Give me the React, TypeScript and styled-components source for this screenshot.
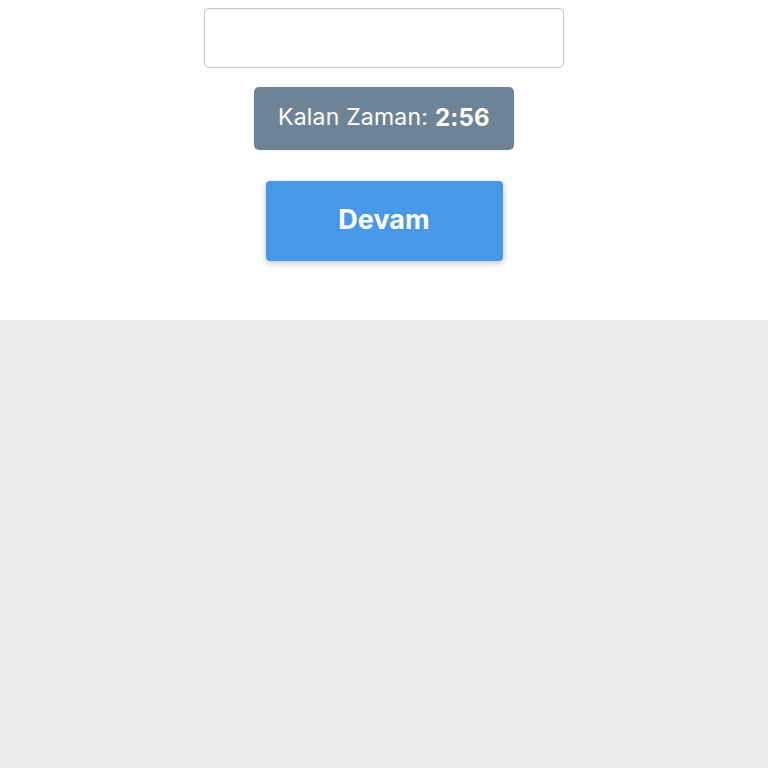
import React from 'react'
import styled, { createGlobalStyle } from 'styled-components'

const GlobalStyle = createGlobalStyle`
  html, body {
    margin: 0;
    padding: 0;
    background: #ebebeb;
    font-family: Inter, "Open Sans", Arial, sans-serif;
  }
`

const Panel = styled.main`
  background: #ffffff;
  height: 321px;
  box-sizing: border-box;
  padding-top: 8px;
  display: flex;
  flex-direction: column;
  align-items: center;
  border-bottom: 1px solid #e6e6e6;
`

const AnswerInput = styled.input`
  width: 360px;
  height: 60px;
  box-sizing: border-box;
  border: 1px solid #c8c8c8;
  border-radius: 4px;
  box-shadow: inset 0 1px 3px rgba(0, 0, 0, 0.06);
  font-size: 20px;
  padding: 0 12px;
  outline: none;
`

const Timer = styled.div`
  margin-top: 19px;
  width: 260px;
  height: 63px;
  box-sizing: border-box;
  padding-bottom: 3px;
  background: #6e8496;
  border-radius: 5px;
  color: #ffffff;
  font-size: 23px;
  display: flex;
  align-items: center;
  justify-content: center;
  letter-spacing: 0.2px;

  b {
    font-weight: 700;
    margin-left: 7px;
    font-size: 24px;
  }
`

const ContinueButton = styled.button`
  margin-top: 31px;
  width: 237px;
  height: 80px;
  padding-bottom: 4px;
  border: none;
  border-radius: 4px;
  background: #4898e8;
  color: #ffffff;
  font-family: inherit;
  font-size: 27px;
  font-weight: 700;
  box-shadow: 0 2px 6px rgba(0, 0, 0, 0.25);
  cursor: pointer;
`

export default function App() {
  return (
    <>
      <GlobalStyle />
      <Panel>
        <AnswerInput type="text" />
        <Timer>
          Kalan Zaman:<b>2:56</b>
        </Timer>
        <ContinueButton>Devam</ContinueButton>
      </Panel>
    </>
  )
}
